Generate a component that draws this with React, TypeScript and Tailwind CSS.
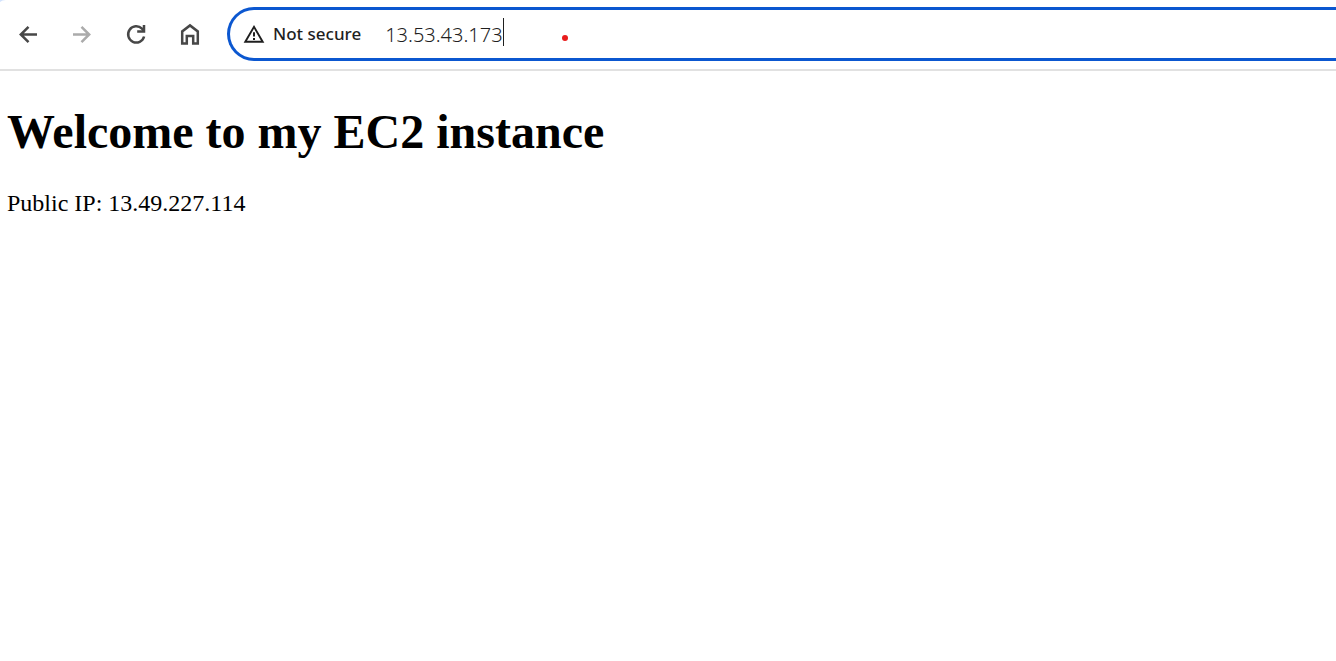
import { useState, type ReactNode } from "react";

function ToolbarButton({ label, disabled, children }: { label: string; disabled?: boolean; children: ReactNode }) {
  return (
    <button
      type="button"
      aria-label={label}
      disabled={disabled}
      className="flex h-[54px] w-[54px] shrink-0 items-center justify-center rounded-full text-[#474747] disabled:text-[#ababab]"
    >
      <svg viewBox="0 0 24 24" className="size-6" fill="none" stroke="currentColor" strokeWidth="2.5" aria-hidden="true">
        {children}
      </svg>
    </button>
  );
}

export default function App() {
  const [address, setAddress] = useState("13.53.43.173");

  return (
    <div className="min-h-screen overflow-hidden bg-white">
      <header className="relative flex items-center border-b-2 border-[#e1e1e1] pt-[7px] pb-2 pl-px font-['Noto_Sans',sans-serif]">
        <svg className="absolute top-0 left-0 h-[3px] w-2" viewBox="0 0 8 3" aria-hidden="true">
          <path d="M0 0H6Q2 0 0 2Z" fill="#d3e3fd" />
        </svg>
        <nav aria-label="Navigation" className="flex">
          <ToolbarButton label="Back">
            <path d="M21 12.5H5M12.5 4.8 4.8 12.5l7.7 7.7" />
          </ToolbarButton>
          <ToolbarButton label="Forward" disabled>
            <path d="M3 12.5h16M11.5 4.8 19.2 12.5l-7.7 7.7" />
          </ToolbarButton>
          <ToolbarButton label="Reload">
            <path d="M20.1 14.5A8.1 8.1 0 1 1 18 6.7L20 9" />
            <path d="M20 3v6.5h-6.8" />
          </ToolbarButton>
          <ToolbarButton label="Home">
            <path d="M4.2 21.4V9.4L12 3.4l7.8 6v12h-4.6v-7.3H8.8v7.3Z" />
          </ToolbarButton>
        </nav>
        <form
          onSubmit={(event) => event.preventDefault()}
          className="ml-2.5 flex h-[54px] min-w-0 flex-1 items-center rounded-l-full border-3 border-r-0 border-[#0b57d0] pl-[13px]"
        >
          <svg viewBox="0 0 22 20" className="h-5 w-[22px] shrink-0" fill="none" stroke="#1f1f1f" aria-hidden="true">
            <path d="M2.3 17.7 11 2.8l8.7 14.9Z" strokeWidth="1.9" />
            <path d="M11 8.2v4.2M11 13.9v2" strokeWidth="2" />
          </svg>
          <label htmlFor="address" className="ml-2 text-[17px] leading-6 font-medium whitespace-nowrap text-[#1f1f1f]">
            Not secure
          </label>
          <input
            id="address"
            value={address}
            onChange={(event) => setAddress(event.target.value)}
            spellCheck={false}
            className="ml-6 pt-px text-[20px] leading-7 font-light text-[#1f1f1f] outline-none [field-sizing:content]"
          />
          <span className="mb-1 h-7 w-px bg-[#1f1f1f]" />
          <span className="mt-2 ml-[58px] size-1.5 rounded-full bg-[#e81c1c]" />
        </form>
      </header>
      <main className="px-[7px] pt-[33px] font-['Liberation_Serif',serif] text-black">
        <h1 className="text-[48px] leading-14 font-bold">Welcome to my EC2 instance</h1>
        <p className="mt-[29px] text-[24px] leading-7">Public IP: 13.49.227.114</p>
      </main>
    </div>
  );
}
